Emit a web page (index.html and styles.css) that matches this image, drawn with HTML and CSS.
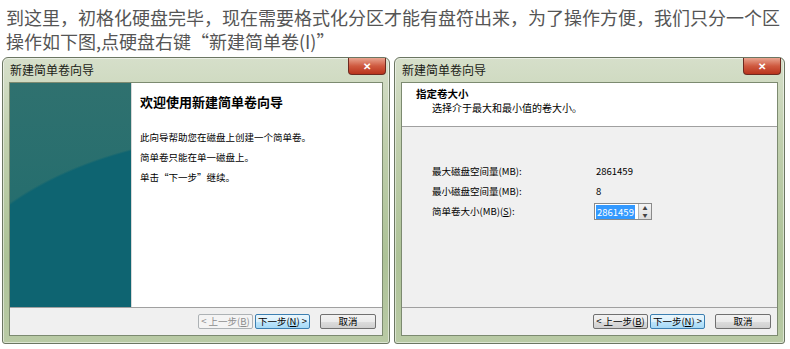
FILE: index.html
```html
<!DOCTYPE html>
<html lang="zh-CN">
<head>
  <meta charset="UTF-8">
  <title>新建简单卷</title>
<link rel="stylesheet" href="styles.css">
</head>
<body>
  <p class="intro">到这里，初格化硬盘完毕，现在需要格式化分区才能有盘符出来，为了操作方便，我们只分一个区<br>操作如下图,点硬盘右键“新建简单卷(I)”</p>
  <div class="shots">
    <div class="win">
      <div class="titlebar">
        <span class="title">新建简单卷向导</span>
        <span class="close">✕</span>
      </div>
      <div class="client">
        <div class="welcome">
          <div class="side"></div>
          <div class="welcome-text">
            <h2>欢迎使用新建简单卷向导</h2>
            <p>此向导帮助您在磁盘上创建一个简单卷。</p>
            <p>简单卷只能在单一磁盘上。</p>
            <p>单击“下一步”继续。</p>
          </div>
        </div>
        <div class="buttons">
          <button class="btn disabled">&lt; 上一步(<u>B</u>)</button>
          <button class="btn default">下一步(<u>N</u>) &gt;</button>
          <button class="btn cancel">取消</button>
        </div>
      </div>
    </div>
    <div class="win">
      <div class="titlebar">
        <span class="title">新建简单卷向导</span>
        <span class="close">✕</span>
      </div>
      <div class="client">
        <div class="header">
          <div class="header-title">指定卷大小</div>
          <div class="header-sub">选择介于最大和最小值的卷大小。</div>
        </div>
        <div class="form">
          <div class="row"><span class="label">最大磁盘空间量(MB):</span><span class="value">2861459</span></div>
          <div class="row"><span class="label">最小磁盘空间量(MB):</span><span class="value">8</span></div>
          <div class="row"><span class="label">简单卷大小(MB)(<u>S</u>):</span>
            <span class="spin"><span class="spin-input"><span class="sel">2861459</span></span><span class="spin-arrows"><span>▲</span><span>▼</span></span></span>
          </div>
        </div>
        <div class="buttons">
          <button class="btn">&lt; 上一步(<u>B</u>)</button>
          <button class="btn default">下一步(<u>N</u>) &gt;</button>
          <button class="btn cancel">取消</button>
        </div>
      </div>
    </div>
  </div>
</body>
</html>
```
FILE: styles.css
```css
body {
  margin: 0;
  background: #ffffff;
  font-family: "Noto Sans CJK SC", "Noto Sans", sans-serif;
}
.intro {
  margin: 0;
  padding: 5px 0 0 6px;
  font-size: 18px;
  line-height: 24px;
  color: #555;
  white-space: nowrap;
}
.shots {
  display: flex;
  gap: 4px;
  padding: 4px 0 0 2px;
}
.win {
  width: 388px;
  height: 287px;
  border: 1px solid #6b7662;
  border-radius: 6px 6px 3px 3px;
  background: linear-gradient(180deg, #d6dfca 0%, #c0cfad 30%, #adc297 70%, #b9caa5 100%);
  display: flex;
  flex-direction: column;
  padding: 0 6px 7px 6px;
  box-sizing: border-box;
  box-shadow: inset 0 0 0 1px rgba(255,255,255,0.5);
}
.win + .win {
  width: 391px;
}
.titlebar {
  height: 24px;
  display: flex;
  align-items: flex-start;
  justify-content: space-between;
  flex-shrink: 0;
}
.title {
  font-size: 12px;
  line-height: 17px;
  color: #1a2015;
  padding-top: 3px;
  padding-left: 1px;
}
.close {
  width: 36px;
  height: 16px;
  margin-right: -3px;
  border: 1px solid #6d2a20;
  border-top: none;
  border-radius: 0 0 4px 4px;
  background: linear-gradient(180deg, #e9a48f 0%, #cf5a40 50%, #b9331c 100%);
  color: #fff;
  font-size: 10px;
  font-weight: bold;
  text-align: center;
  line-height: 15px;
}
.client {
  flex: 1;
  background: #f0f0f0;
  border: 1px solid #7c8a70;
  display: flex;
  flex-direction: column;
}
.welcome {
  flex: 1;
  display: flex;
  background: #fff;
  border-bottom: 1px solid #a0a0a0;
}
.side {
  width: 121px;
  background:
    radial-gradient(ellipse 330px 200px at 250px 250px, #0e6471 99%, rgba(14,100,113,0) 100%),
    linear-gradient(180deg, #2f716f 0%, #1e6b6d 100%);
}
.welcome-text {
  flex: 1;
  padding: 9px 8px 0 8px;
  border-left: 1px solid #d8d8d8;
}
.welcome-text h2 {
  margin: 0 0 15px;
  font-size: 13px;
  font-weight: bold;
  color: #000;
  line-height: 20px;
}
.welcome-text p {
  margin: 0;
  font-size: 9.5px;
  line-height: 20px;
  color: #000;
}
.header {
  background: #fff;
  height: 44px;
  border-bottom: 1px solid #a0a0a0;
  padding: 4px 0 0 14px;
  box-sizing: border-box;
  flex-shrink: 0;
}
.header-title {
  font-size: 10.5px;
  font-weight: bold;
  line-height: 14px;
}
.header-sub {
  font-size: 10px;
  line-height: 13px;
  padding-left: 16px;
}
.form {
  flex: 1;
  padding: 34px 0 0 30px;
  border-bottom: 1px solid #a0a0a0;
}
.row {
  display: flex;
  align-items: center;
  height: 20px;
  font-size: 9.5px;
  color: #000;
}
.label {
  width: 164px;
}
.spin {
  display: flex;
  height: 15px;
  border: 1px solid #8a8a8a;
  background: #fff;
  margin-left: -2px;
}
.spin-input {
  width: 42px;
  padding: 1px 0 0 1px;
}
.sel {
  background: #3399ff;
  color: #fff;
  font-size: 9.5px;
  line-height: 12px;
  padding: 0 1px;
}
.spin-arrows {
  width: 12px;
  display: flex;
  flex-direction: column;
  border-left: 1px solid #b5b5b5;
  background: linear-gradient(180deg, #f4f4f4, #dcdcdc);
}
.spin-arrows span {
  flex: 1;
  font-size: 5px;
  line-height: 7px;
  text-align: center;
  color: #444;
}
.buttons {
  height: 27px;
  display: flex;
  align-items: center;
  justify-content: flex-end;
  padding-right: 6px;
  flex-shrink: 0;
}
.btn {
  height: 15px;
  width: 55px;
  padding: 0;
  margin-left: 2px;
  font-family: "Noto Sans CJK SC", sans-serif;
  font-size: 9.5px;
  line-height: 13px;
  color: #000;
  border: 1px solid #707070;
  border-radius: 2px;
  background: linear-gradient(180deg, #f2f2f2 0%, #ebebeb 50%, #dddddd 51%, #cfcfcf 100%);
}
.btn.disabled {
  color: #8d8d8d;
  border-color: #adb2b5;
  background: #f4f4f4;
}
.btn.default {
  border-color: #3c7fb1;
  background: linear-gradient(180deg, #eaf6fd 0%, #d9f0fc 50%, #bee6fd 51%, #a7d9f5 100%);
}
.btn.cancel {
  width: 56px;
  margin-left: 10px;
}
```
